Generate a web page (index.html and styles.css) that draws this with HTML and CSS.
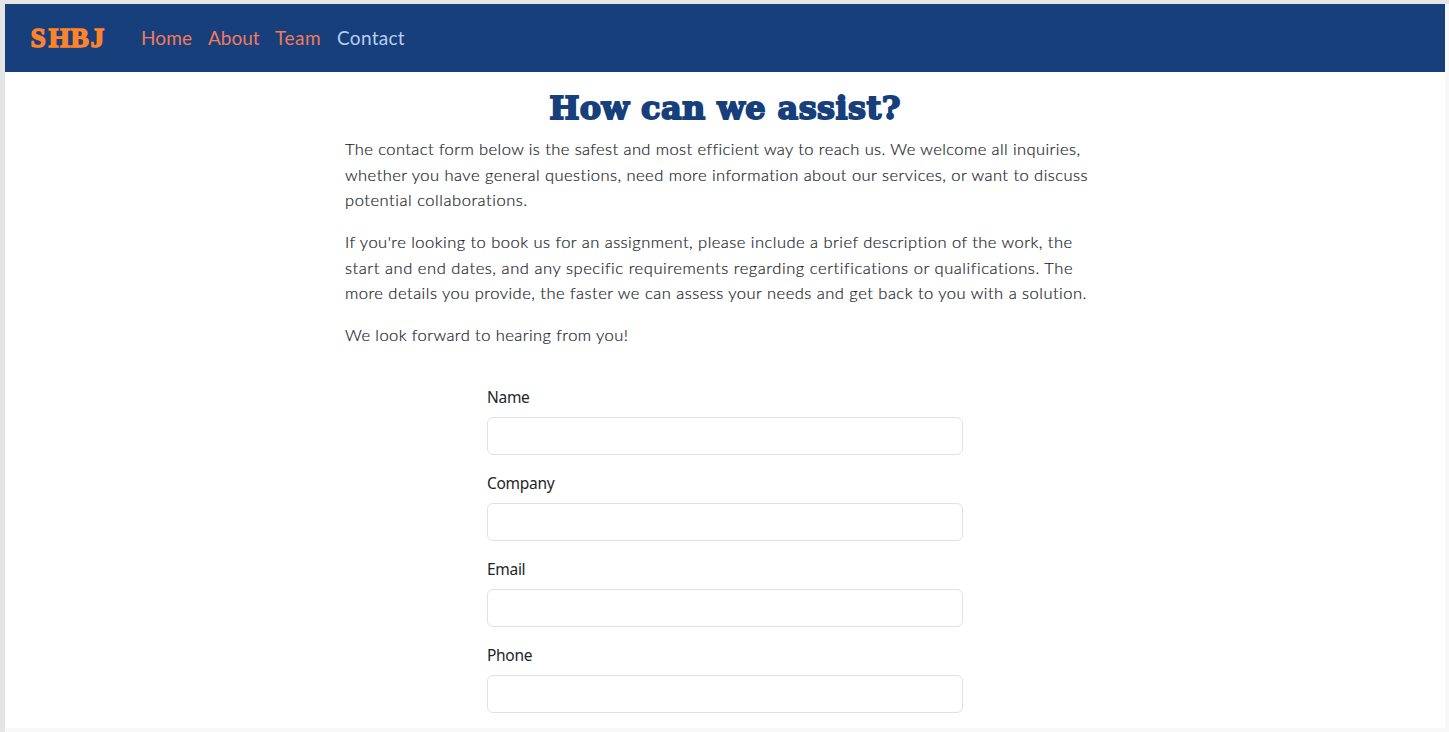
FILE: index.html
```html
<!DOCTYPE html>
<html lang="en">
<head>
<meta charset="utf-8">
<title>SHBJ - Contact</title>
<link rel="stylesheet" href="styles.css">
</head>
<body>
<div class="page">
  <nav class="navbar">
    <a class="brand" href="#"><svg width="80" height="36" viewBox="0 0 80 36" role="img" aria-label="SHBJ"><text class="brand-text" x="1.5 19.5 41.5 61.5" y="27">SHBJ</text></svg></a>
    <a class="nav-link home" href="#">Home</a>
    <a class="nav-link about" href="#">About</a>
    <a class="nav-link team" href="#">Team</a>
    <a class="nav-link contact active" href="#">Contact</a>
  </nav>
  <main>
    <h1>How can we assist?</h1>
    <div class="intro">
      <p><span class="l1">The contact form below is the safest and most efficient way to reach us. We welcome all inquiries,</span>
      <span class="l2">whether you have general questions, need more information about our services, or want to discuss</span>
      <span class="l3">potential collaborations.</span></p>
      <p><span class="l4">If you're looking to book us for an assignment, please include a brief description of the work, the</span>
      <span class="l5">start and end dates, and any specific requirements regarding certifications or qualifications. The</span>
      <span class="l6">more details you provide, the faster we can assess your needs and get back to you with a solution.</span></p>
      <p><span class="l7">We look forward to hearing from you!</span></p>
    </div>
    <form class="contact-form">
      <div class="field"><label for="name">Name</label><input id="name" type="text"></div>
      <div class="field"><label for="company">Company</label><input id="company" type="text"></div>
      <div class="field"><label for="email">Email</label><input id="email" type="email"></div>
      <div class="field"><label for="phone">Phone</label><input id="phone" type="tel"></div>
    </form>
  </main>
</div>
</body>
</html>
```
FILE: styles.css
```css
* { box-sizing: border-box; }
html { height: 100%; }
body {
  margin: 0;
  height: 100vh;
  overflow: hidden;
  background: #f8f8f8;
  border-top: 4px solid #e5e5e5;
  border-left: 5px solid #e5e5e5;
  color: #212529;
  font-family: Lato, sans-serif;
}
.page {
  width: 1440px;
  height: 724px;
  background: #fff;
  overflow: hidden;
}
.navbar {
  display: flex;
  align-items: center;
  height: 68px;
  padding-left: 24px;
  background: #163f7c;
}
.brand { display: flex; width: 112px; }
.brand-text {
  font: bold 27.5px "Liberation Serif", serif;
  fill: #ff832b;
  stroke: #ff832b;
  stroke-width: 1.4px;
}
.nav-link {
  margin-right: 16px;
  font-size: 19px;
  line-height: 28px;
  letter-spacing: 0.15px;
  color: #f5795a;
  text-decoration: none;
  white-space: nowrap;
}
.nav-link.home { width: 51px; }
.nav-link.about { width: 51px; letter-spacing: 0; }
.nav-link.team { width: 46px; letter-spacing: 0.5px; }
.nav-link.active { color: #b9cef0; letter-spacing: 0.3px; }
h1 {
  margin: 16px 0 8px;
  height: 41px;
  line-height: 41px;
  text-align: center;
  font-family: "DejaVu Serif", serif;
  font-size: 32px;
  font-weight: bold;
  letter-spacing: 0.4px;
  color: #163f7c;
  -webkit-text-stroke: 1.8px #163f7c;
}
.intro { padding-left: 340px; }
.intro p {
  margin: 0 0 16px;
  font-size: 16.5px;
  font-weight: 300;
  line-height: 25.65px;
  -webkit-text-stroke: 0.2px #212529;
}
.intro span { display: block; width: max-content; white-space: nowrap; }
.intro .l1 { letter-spacing: 0.415px; }
.intro .l2 { letter-spacing: 0.46px; }
.intro .l3 { letter-spacing: 0.54px; }
.intro .l4 { letter-spacing: 0.47px; }
.intro .l5 { letter-spacing: 0.56px; }
.intro .l6 { letter-spacing: 0.485px; }
.intro .l7 { letter-spacing: 0.43px; }
.contact-form {
  width: 476px;
  margin: 36.5px auto 0 482px;
}
.field { height: 86px; }
.field label {
  display: block;
  height: 32px;
  line-height: 24px;
  font-family: "Noto Sans", sans-serif;
  font-size: 15.5px;
  letter-spacing: -0.3px;
}
.field input {
  display: block;
  width: 476px;
  height: 38px;
  border: 1px solid #dee2e6;
  border-radius: 6px;
  background: #fff;
}
```
